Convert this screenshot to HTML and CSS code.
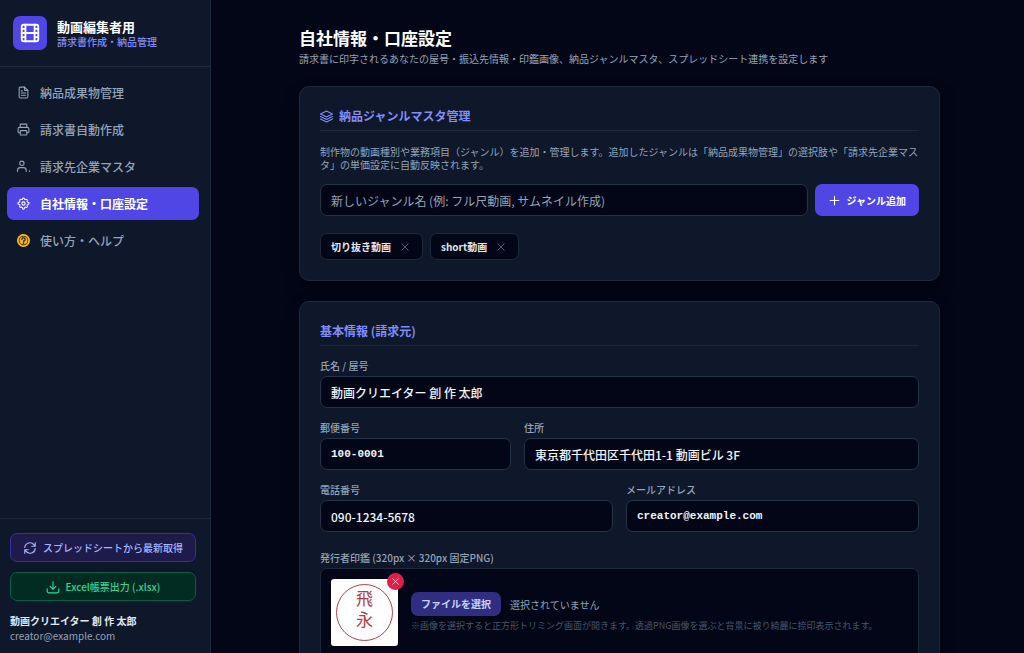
FILE: index.html
```html
<!DOCTYPE html>
<html lang="ja">
<head>
    <meta charset="UTF-8">
    <meta name="viewport" content="width=device-width, initial-scale=1.0">
    <title>自社情報・口座設定</title>
    <link rel="stylesheet" href="styles.css">
</head>
<body>

<aside class="sidebar">
    <div class="brand">
        <div class="brand-logo">
            <svg class="icon-lg" viewBox="0 0 24 24"><rect x="3" y="3" width="18" height="18" rx="2"/><path d="M7 3v18M17 3v18M7 12h10M3 7.5h4M3 12h4M3 16.5h4M17 7.5h4M17 12h4M17 16.5h4"/></svg>
        </div>
        <div>
            <div class="brand-name">動画編集者用</div>
            <div class="brand-sub">請求書作成・納品管理</div>
        </div>
    </div>

    <nav class="menu">
        <a href="#deliverables" class="menu-item">
            <svg class="icon" viewBox="0 0 24 24"><path d="M14 2H6a2 2 0 0 0-2 2v16a2 2 0 0 0 2 2h12a2 2 0 0 0 2-2V8z"/><path d="M14 2v6h6M8 9h2M8 13h8M8 17h8"/></svg>
            納品成果物管理
        </a>
        <a href="#invoices" class="menu-item">
            <svg class="icon" viewBox="0 0 24 24"><path d="M6 8V2h12v6"/><path d="M6 18H4a2 2 0 0 1-2-2v-5a3 3 0 0 1 3-3h14a3 3 0 0 1 3 3v5a2 2 0 0 1-2 2h-2"/><rect x="6" y="14" width="12" height="8" rx="1"/></svg>
            請求書自動作成
        </a>
        <a href="#clients" class="menu-item">
            <svg class="icon" viewBox="0 0 24 24"><circle cx="9" cy="6" r="4"/><path d="M1 21v-2a5 5 0 0 1 5-5h6a5 5 0 0 1 5 5v2M23 20v1"/></svg>
            請求先企業マスタ
        </a>
        <a href="#settings" class="menu-item active">
            <svg class="icon" viewBox="0 0 24 24"><path d="M10.3 2.300c.4-1.800 3-1.800 3.400 0a1.800 1.800 0 0 0 2.700 1.100c1.600-1 3.400.9 2.500 2.400a1.800 1.800 0 0 0 1.100 2.700l1 .3c1.800.6 1.800 3.200 0 3.700l-1 .3a1.800 1.800 0 0 0-1.100 2.700c1 1.600-.9 3.400-2.500 2.500a1.800 1.800 0 0 0-2.700 1.100l-.2 1.200c-.5 1.700-2.600 1.700-3 0l-.2-1.200a1.800 1.800 0 0 0-2.700-1.100c-1.600.9-3.400-.9-2.500-2.500A1.800 1.800 0 0 0 4 12.800l-1-.3c-1.800-.5-1.800-3.100 0-3.700l1-.3a1.800 1.800 0 0 0 1.100-2.700c-.9-1.500.9-3.400 2.500-2.400a1.800 1.800 0 0 0 2.700-1.100z" transform="translate(0 1)"/><circle cx="12" cy="12" r="3"/></svg>
            自社情報・口座設定
        </a>
        <a href="#help" class="menu-item">
            <svg class="icon icon-help" viewBox="0 0 24 24"><circle class="coin" cx="12" cy="12" r="11"/><circle cx="12" cy="12" r="8"/><path class="mark" d="M9 10a3 3 0 1 1 4.500 2.600c-1 .6-1.500 1-1.500 2.400M12 17v1"/></svg>
            使い方・ヘルプ
        </a>
    </nav>

    <div class="sidebar-footer">
        <button type="button" class="side-button sync-button">
            <svg class="icon" viewBox="0 0 24 24"><path d="M3 11a9 9 0 0 1 16-4.500L21 9M21 3v6h-6M21 13a9 9 0 0 1-16 4.500L3 15M3 21v-6h6"/></svg>
            スプレッドシートから最新取得
        </button>
        <button type="button" class="side-button excel-button">
            <svg class="icon" viewBox="0 0 24 24"><path d="M2 15v4a3 3 0 0 0 3 3h14a3 3 0 0 0 3-3v-4M12 3v13M7 11l5 5 5-5"/></svg>
            Excel帳票出力 (.xlsx)
        </button>
        <div class="user-name">動画クリエイター 創 作 太郎</div>
        <div class="user-mail">creator@example.com</div>
    </div>
</aside>

<main class="main">
    <div class="content">
        <header class="page-header">
            <h1>自社情報・口座設定</h1>
            <p>請求書に印字されるあなたの屋号・振込先情報・印鑑画像、納品ジャンルマスタ、スプレッドシート連携を設定します</p>
        </header>

        <!-- ジャンル管理 -->
        <section class="card">
            <h2>
                <svg class="icon" viewBox="0 0 24 24"><path d="M12 2 1 7.500 12 13l11-5.500zM1 12l11 5.500L23 12M1 16.500 12 22l11-5.500"/></svg>
                納品ジャンルマスタ管理
            </h2>
            <p class="card-text">制作物の動画種別や業務項目（ジャンル）を追加・管理します。追加したジャンルは「納品成果物管理」の選択肢や「請求先企業マスタ」の単価設定に自動反映されます。</p>
            <form class="genre-form">
                <input type="text" class="text-input" aria-label="新しいジャンル名" placeholder="新しいジャンル名 (例: フル尺動画, サムネイル作成)">
                <button type="button" class="add-button">
                    <svg class="icon" viewBox="0 0 24 24"><path d="M12 4v16M4 12h16"/></svg>
                    ジャンル追加
                </button>
            </form>
            <div class="tags">
                <span class="tag">切り抜き動画
                    <button type="button" class="tag-remove" aria-label="切り抜き動画を削除"><svg viewBox="0 0 10 10"><path d="M1 1l8 8M9 1l-8 8"/></svg></button>
                </span>
                <span class="tag">short動画
                    <button type="button" class="tag-remove" aria-label="short動画を削除"><svg viewBox="0 0 10 10"><path d="M1 1l8 8M9 1l-8 8"/></svg></button>
                </span>
            </div>
        </section>

        <!-- 基本情報 -->
        <section class="card">
            <h2>基本情報 (請求元)</h2>
            <form class="info-form">
                <div class="field field-full">
                    <label for="name">氏名 / 屋号</label>
                    <input type="text" id="name" class="text-input" value="動画クリエイター 創 作 太郎">
                </div>
                <div class="field field-third">
                    <label for="zip">郵便番号</label>
                    <input type="text" id="zip" class="text-input mono" value="100-0001">
                </div>
                <div class="field field-wide">
                    <label for="address">住所</label>
                    <input type="text" id="address" class="text-input" value="東京都千代田区千代田1-1 動画ビル 3F">
                </div>
                <div class="field field-half">
                    <label for="tel">電話番号</label>
                    <input type="tel" id="tel" class="text-input" value="090-1234-5678">
                </div>
                <div class="field field-half">
                    <label for="email">メールアドレス</label>
                    <input type="email" id="email" class="text-input mono" value="creator@example.com">
                </div>
                <div class="field field-full field-stamp">
                    <label for="stamp">発行者印鑑 (320px × 320px 固定PNG)</label>
                    <div class="stamp-box">
                        <div class="stamp-preview">
                            <div class="stamp">飛<br>永</div>
                            <button type="button" class="stamp-remove" aria-label="印鑑を削除"><svg viewBox="0 0 10 10"><path d="M1 1l8 8M9 1l-8 8"/></svg></button>
                        </div>
                        <div class="stamp-info">
                            <div class="file-row">
                                <input type="file" id="stamp" class="file-input" accept="image/png">
                                <label for="stamp" class="file-button">ファイルを選択</label>
                                <span class="file-name">選択されていません</span>
                            </div>
                            <p class="hint">※画像を選択すると正方形トリミング画面が開きます。透過PNG画像を選ぶと背景に被り綺麗に捺印表示されます。</p>
                        </div>
                    </div>
                </div>
            </form>
        </section>
    </div>
</main>

</body>
</html>
```
FILE: styles.css
```css
* {
    box-sizing: border-box;
}
body {
    display: flex;
    height: 100vh;
    margin: 0;
    overflow: hidden;
    font-family: "Noto Sans CJK JP", sans-serif;
    font-size: 12px;
    background: #020617;
    color: #f1f5f9;
}
h1, h2, p {
    margin: 0;
}
button, input {
    font-family: inherit;
}
button {
    cursor: pointer;
}
svg {
    fill: none;
    stroke: currentColor;
    stroke-width: 2;
    stroke-linecap: round;
    stroke-linejoin: round;
    flex-shrink: 0;
}
.icon {
    width: 13px;
    height: 13px;
}
.icon-lg {
    width: 22px;
    height: 22px;
}

/* サイドバー */
.sidebar {
    display: flex;
    flex-direction: column;
    flex-shrink: 0;
    width: 211px;
    background: #0f172a;
    border-right: 1px solid #1e293b;
}
.brand {
    display: flex;
    align-items: center;
    gap: 10px;
    padding: 16px 13px;
    border-bottom: 1px solid #1e293b;
}
.brand-logo {
    display: flex;
    align-items: center;
    justify-content: center;
    width: 34px;
    height: 34px;
    border-radius: 7px;
    background: #4f46e5;
    color: #fff;
}
.brand-name {
    font-size: 13px;
    font-weight: bold;
    line-height: 17px;
    color: #fff;
}
.brand-sub {
    font-size: 10px;
    font-weight: 500;
    line-height: 14px;
    color: #818cf8;
}
.menu {
    display: flex;
    flex-direction: column;
    flex: 1;
    gap: 4px;
    padding: 9px 11px 9px 7px;
}
.menu-item {
    display: flex;
    align-items: center;
    gap: 10px;
    height: 33px;
    padding: 0 10px;
    border-radius: 7px;
    font-weight: 500;
    color: #94a3b8;
    text-decoration: none;
}
.menu-item:hover {
    color: #fff;
}
.menu-item.active {
    background: #4f46e5;
    color: #fff;
    font-weight: bold;
}
.icon-help {
    stroke: #57430c;
}
.icon-help .coin {
    fill: #fbbf24;
    stroke: #fbbf24;
}
.icon-help .mark {
    stroke-width: 3;
}
.sidebar-footer {
    padding: 14px 14px 10px 10px;
    border-top: 1px solid #1e293b;
}
.side-button {
    display: flex;
    align-items: center;
    justify-content: center;
    gap: 6px;
    width: 100%;
    height: 29px;
    margin-bottom: 10px;
    padding: 0;
    border-radius: 7px;
    font-size: 10px;
    font-weight: 500;
}
.side-button .icon {
    width: 14px;
    height: 14px;
}
.sync-button {
    background: #1e1b4b;
    border: 1px solid #3730a3;
    color: #a5b4fc;
}
.excel-button {
    margin-bottom: 12px;
    background: #022c22;
    border: 1px solid #065f46;
    color: #34d399;
}
.user-name {
    font-size: 10px;
    font-weight: bold;
    line-height: 15px;
    color: #e2e8f0;
}
.user-mail {
    font-size: 10px;
    line-height: 15px;
    color: #94a3b8;
}

/* メイン */
.main {
    flex: 1;
    min-width: 0;
    padding: 26px 20px 26px 24px;
    overflow-y: auto;
    scrollbar-width: none;
}
.content {
    max-width: 641px;
    margin: 0 auto;
}
.page-header {
    margin-bottom: 20px;
}
.page-header h1 {
    font-size: 17px;
    line-height: 24px;
    color: #fff;
}
.page-header p {
    margin-top: 2px;
    font-size: 10px;
    line-height: 14px;
    color: #94a3b8;
}
.card {
    margin-bottom: 20px;
    padding: 20px;
    background: #0f172a;
    border: 1px solid #1e293b;
    border-radius: 10px;
    box-shadow: 0 8px 16px rgba(0, 0, 0, 0.4);
}
.card h2 {
    display: flex;
    align-items: center;
    gap: 6px;
    padding-bottom: 5px;
    border-bottom: 1px solid #1e293b;
    font-size: 12px;
    line-height: 18px;
    color: #818cf8;
}
.card-text {
    margin-top: 14px;
    font-size: 10px;
    line-height: 13px;
    color: #94a3b8;
}
.text-input {
    width: 100%;
    height: 32px;
    padding: 0 10px;
    background: #020617;
    border: 1px solid #263347;
    border-radius: 7px;
    font-size: 12px;
    font-weight: 500;
    color: #f1f5f9;
}
.text-input::placeholder {
    font-weight: normal;
    color: #94a3b8;
}
.text-input:focus {
    outline: none;
    border-color: #6366f1;
}
.text-input.mono {
    font-family: "Liberation Mono", monospace;
    font-size: 11px;
    font-weight: bold;
}
.genre-form {
    display: flex;
    gap: 7px;
    margin-top: 13px;
}
.genre-form .text-input {
    flex: 1;
    min-width: 0;
}
.add-button {
    display: flex;
    align-items: center;
    gap: 6px;
    height: 32px;
    padding: 0 13px;
    background: #4f46e5;
    border: none;
    border-radius: 7px;
    font-size: 10px;
    font-weight: bold;
    color: #fff;
}
.tags {
    display: flex;
    flex-wrap: wrap;
    gap: 7px;
    margin-top: 17px;
}
.tag {
    display: flex;
    align-items: center;
    gap: 7px;
    height: 27px;
    padding: 0 10px;
    background: #020617;
    border: 1px solid #1e293b;
    border-radius: 7px;
    font-size: 10px;
    font-weight: bold;
    color: #e2e8f0;
}
.tag-remove {
    display: flex;
    padding: 3px;
    background: none;
    border: none;
    color: #64748b;
}
.tag-remove svg {
    width: 8px;
    height: 8px;
    stroke-width: 1;
}
.info-form {
    display: grid;
    grid-template-columns: repeat(6, 1fr);
    gap: 13px;
    margin-top: 13px;
}
.field label {
    font-weight: 500;
}
.field > label {
    display: block;
    margin-bottom: 3px;
    font-size: 10px;
    line-height: 14px;
    color: #94a3b8;
}
.field-full {
    grid-column: span 6;
}
.field-third {
    grid-column: span 2;
}
.field-wide {
    grid-column: span 4;
}
.field-half {
    grid-column: span 3;
}
.field-stamp {
    padding-top: 6px;
}
.stamp-box {
    display: flex;
    align-items: center;
    gap: 13px;
    padding: 10px;
    background: #020617;
    border: 1px solid #1e293b;
    border-radius: 7px;
}
.stamp-preview {
    position: relative;
    flex-shrink: 0;
    padding: 5px;
    background: #fff;
    border-radius: 3px;
}
.stamp {
    width: 57px;
    height: 57px;
    padding-top: 2px;
    border: 1px solid #b0404a;
    border-radius: 50%;
    font-size: 17px;
    line-height: 21px;
    text-align: center;
    color: #b0404a;
}
.stamp-remove {
    position: absolute;
    top: -6px;
    right: -6px;
    display: flex;
    align-items: center;
    justify-content: center;
    width: 17px;
    height: 17px;
    padding: 0;
    background: #e11d48;
    border: none;
    border-radius: 50%;
    color: #fff;
}
.stamp-remove svg {
    width: 7px;
    height: 7px;
    stroke-width: 1;
}
.file-row {
    display: flex;
    align-items: center;
    gap: 9px;
}
.file-input {
    position: absolute;
    width: 1px;
    height: 1px;
    opacity: 0;
}
.file-row .file-button {
    padding: 5px 10px;
    background: #312e81;
    border-radius: 7px;
    font-size: 10px;
    font-weight: bold;
    line-height: 14px;
    color: #c7d2fe;
    cursor: pointer;
}
.file-name {
    font-size: 10px;
    color: #94a3b8;
}
.hint {
    margin-top: 3px;
    font-size: 9px;
    line-height: 14px;
    color: #475569;
}
```
